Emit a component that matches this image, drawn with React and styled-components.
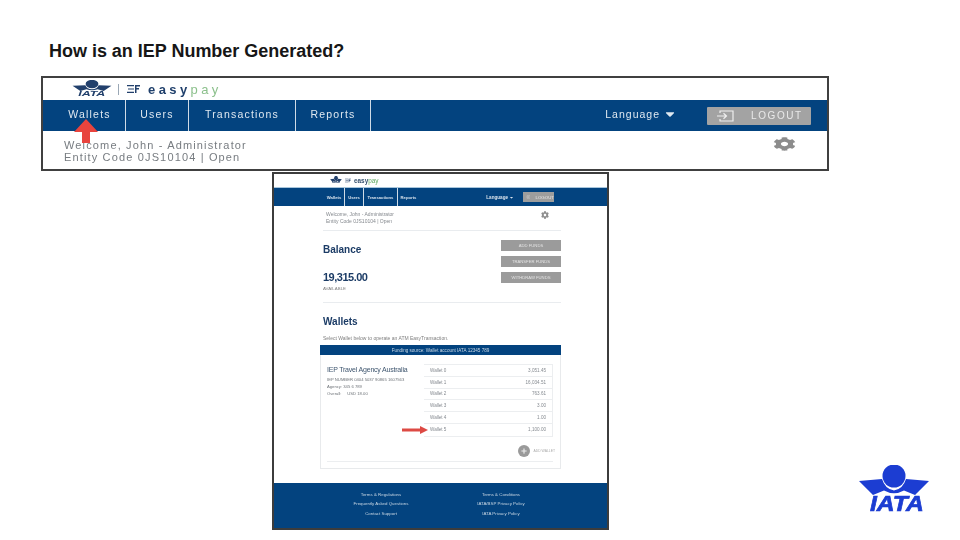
import React from "react";
import styled, { createGlobalStyle } from "styled-components";
import { FaCog, FaCaretDown, FaPlus } from "react-icons/fa";

const BLUE = "#03437f";
const Global = createGlobalStyle`
  html, body { margin: 0; padding: 0; background: #fff; }
  body { font-family: "Liberation Sans", Arial, sans-serif; }
`;
const Slide = styled.div`
  position: relative; width: 960px; height: 540px; overflow: hidden; background: #fff;
  padding-top: 42px; box-sizing: border-box;
`;
const Title = styled.h1`
  margin: 0 0 16px 49px; height: 18px; font-size: 18px; line-height: 18px; font-weight: 700; color: #161616;
  white-space: nowrap; letter-spacing: -.02px;
`;
/* top banner */
const Banner = styled.div`
  position: relative; margin-left: 41px; width: 788px; height: 95px; box-sizing: border-box;
  border: 2px solid #404040; overflow: hidden; display: flex; flex-direction: column; background: #fff;
`;
const BannerHead = styled.div`
  height: 22px; display: flex; align-items: center; padding-left: 29px; gap: 6px;
`;
const Sep = styled.span`width: 1px; height: 11px; background: #9aa7b5;`;
const Easy = styled.span`
  font-size: 13px; font-weight: 700; letter-spacing: 3.4px; color: #20406c; filter: blur(.4px);
  b { color: #8cc08c; font-weight: 400; }
`;
const BigNav = styled.nav`
  height: 31px; flex: none; background: ${BLUE}; display: flex; align-items: stretch; color: #dfe8f0;
`;
const BigItem = styled.div`
  width: ${p => p.$w}px; box-sizing: border-box; display: flex; align-items: center; justify-content: center;
  border-right: 1px solid #cfdbe6; font-size: 10.5px; letter-spacing: 1.2px; filter: blur(.4px); padding: 0 0 3px ${p => p.$pad || 0}px;
`;
const BigRight = styled.div`
  margin-left: auto; display: flex; align-items: center; padding-right: 16px;
`;
const BigLang = styled.div`
  font-size: 10.5px; letter-spacing: 1px; filter: blur(.4px); display: flex; align-items: center; gap: 3px; margin-right: 30px; color:#dfe8f0; padding-bottom: 3px;
`;
const BigLogout = styled.div`
  width: 104px; height: 18px; background: #a3a3a3; border-radius: 1px; display: flex; align-items: center;
  padding-left: 9px; gap: 17px; box-sizing: border-box; font-size: 10px; letter-spacing: 1.6px; color: #e9e9e9; filter: blur(.35px);
`;
const BannerBody = styled.div`
  flex: 1; display: flex; justify-content: space-between; padding: 7px 31px 0 21px; min-height: 0;
`;
const BigWelcome = styled.div`
  font-size: 11px; line-height: 12px; letter-spacing: 1.15px; color: #777c81; filter: blur(.4px); margin-top: 1px; white-space: nowrap;
`;
const BigGear = styled(FaCog)`color: #8c8c8c; width: 23px; height: 14px; margin-top: -1px;`;

/* embedded page */
const Page = styled.div`
  margin: 1px 0 0 272px; width: 337px; height: 358px; box-sizing: border-box; border: 2px solid #3c3c3c;
  background: #fff; display: flex; flex-direction: column; overflow: hidden; position: relative;
`;
const PageHead = styled.div`
  height: 13px; flex: none; display: flex; align-items: center; gap: 3px; padding-left: 56px;
`;
const TinyEasy = styled.span`
  font-size: 6.4px; font-weight: 700; color: #34506e; filter: blur(.35px); b { color: #5fa85f; font-weight: 400; }
`;
const Nav = styled.nav`
  height: 19px; flex: none; background: ${BLUE}; border-top: 1px solid #a8c6dc; box-sizing: border-box;
  display: flex; align-items: stretch; padding-left: 50px; color: #d8e2ec;
`;
const NavItem = styled.div`
  width: ${p => p.$w}px; box-sizing: border-box; display: flex; align-items: center; justify-content: center;
  border-right: ${p => p.$last ? 0 : "1px solid #cfdbe6"}; font-size: 4.2px; font-weight: 700; filter: blur(.35px);
`;
const NavRight = styled.div`margin-left: auto; display: flex; align-items: center; padding-right: 53px;`;
const NavLang = styled.div`
  font-size: 4.6px; font-weight: 700; margin-right: 9px; filter: blur(.35px); display: flex; align-items: center; gap: 1px;
`;
const NavLogout = styled.div`
  width: 31px; height: 10px; background: #9d9d9d; display: flex; align-items: center; gap: 5px; padding-left: 3px; box-sizing: border-box;
  font-size: 4.4px; color: #e8e8e8; filter: blur(.35px);
`;
const Content = styled.div`
  margin-left: 49px; width: 238px; flex: none;
`;
const Welcome = styled.div`
  height: 25px; box-sizing: border-box; border-bottom: 1px solid #e9ecef; display: flex; justify-content: space-between;
  padding: 5px 12px 0 3px; font-size: 5px; line-height: 6.5px; color: #85898e; filter: blur(.35px);
`;
const Gear = styled(FaCog)`color: #8f8f8f; width: 8px; height: 8px; margin-top: 0;`;
const Balance = styled.div`
  height: 72px; box-sizing: border-box; border-bottom: 1px solid #e9ecef; display: flex; justify-content: space-between;
  padding-top: 13px;
`;
const Heading = styled.h2`
  margin: 0; font-size: 10px; line-height: 12px; font-weight: 700; color: #1c3c66; filter: blur(.3px);
`;
const Amount = styled.div`
  margin-top: 15px; font-size: 11px; line-height: 13px; font-weight: 700; color: #1c3c66; filter: blur(.25px); letter-spacing: -.5px;
`;
const Avail = styled.div`margin-top: 2px; font-size: 4.4px; color: #808080; filter: blur(.35px);`;
const Actions = styled.div`display: flex; flex-direction: column; gap: 5px; margin-top: -4px;`;
const Action = styled.div`
  width: 60px; height: 11px; background: #9b9b9b; color: #e3e3e3; font-size: 4.2px; display: flex; align-items: center; justify-content: center;
  filter: blur(.3px);
`;
const WalletHead = styled.div`height: 42px; padding-top: 13px; box-sizing: border-box; `;
const Hint = styled.div`
  font-size: 5px; line-height: 6px; color: #808080; filter: blur(.35px); margin-top: 7px; white-space: nowrap;
`;
const Band = styled.div`
  margin-left: 46px; width: 241px; height: 10px; flex: none; background: ${BLUE}; color: #c9d7e4; font-size: 4.6px;
  display: flex; align-items: center; justify-content: center; filter: blur(.25px);
`;
const Card = styled.div`
  margin-left: 46px; width: 241px; height: 114px; flex: none; box-sizing: border-box; border: 1px solid #e8eaec; border-top: 0;
  padding: 9px 7px 0 6px; display: flex; flex-direction: column;
`;
const CardMain = styled.div`display: flex; justify-content: space-between; gap: 6px; height: 97px; border-bottom: 1px solid #eceef0;`;
const CardInfo = styled.div`padding-top: 1px;`;
const Agency = styled.div`font-size: 7px; line-height: 9px; color: #3f566f; filter: blur(.3px); letter-spacing: -.2px; white-space: nowrap; margin-bottom: 3px;`;
const Meta = styled.div`
  font-size: 4.2px; line-height: 6.9px; color: #6f7479; filter: blur(.35px); white-space: nowrap;
`;
const Side = styled.div`display: flex; flex-direction: column; width: 129px; flex: none;`;
const Table = styled.div`border: 1px solid #eceef0; border-left: 0; margin-bottom: 8px;`;
const Row = styled.div`
  height: 11.8px; box-sizing: border-box; border-bottom: 1px solid ${p => p.$last ? "transparent" : "#eceef0"};
  display: flex; justify-content: space-between; align-items: center; padding: 0 6px;
  font-size: 4.6px; color: #858a90; filter: blur(.35px);
`;
const AddRow = styled.div`display: flex; justify-content: flex-end; align-items: center; gap: 3px; font-size: 3.4px; color: #aaa; margin-right: -2px;`;
const AddCircle = styled.span`
  width: 12px; height: 12px; border-radius: 50%; background: #9a9a9a; color: #eee; display: flex; align-items: center; justify-content: center;
`;
const AddLabel = styled.span`filter: blur(.3px); white-space: nowrap;`;
const Footer = styled.footer`
  margin-top: auto; margin-bottom: 0; height: 45px; flex: none; background: ${BLUE}; color: #c8d6e3; display: grid;
  grid-template-columns: 120px 120px; justify-content: start; padding: 6.5px 0 0 47px; box-sizing: border-box; font-size: 4.4px;
`;
const FootCol = styled.div`
  display: flex; flex-direction: column; align-items: center; line-height: 9.5px; filter: blur(.3px); white-space: nowrap;
`;
/* overlays */
const Overlay = styled.svg`position: absolute; left: ${p => p.$x}px; top: ${p => p.$y}px; overflow: visible;`;
const IataMark = styled.div`
  position: absolute; left: 858px; top: 465px; width: 72px; height: 48px; color: #1c3dd2;
`;
const IataWord = styled.span`
  position: absolute; left: 12px; top: 28px; font-size: 22px; line-height: 22px; font-weight: 700; font-style: italic;
  transform: scaleX(1.12); transform-origin: left; -webkit-text-stroke: .7px #1c3dd2;
`;
const IataTiny = styled.span`
  font-size: ${p => p.$s}px; font-weight: 700; font-style: italic; color: #22406c; line-height: 1; filter: blur(.2px);
  transform: scaleX(${p => p.$sx || 1}); margin-top: -1px;
`;
const LogoStack = styled.div`display: flex; flex-direction: column; align-items: center; line-height: 1;`;
const WingsSvg = styled.svg`display: block;`;

const Wings = ({ w, h, c }) => (
  <WingsSvg width={w} height={h} viewBox="0 0 72 30" preserveAspectRatio="none">
    <path d="M1 16 L24 14 Q27 24 36 25.5 Q45 24 48 14 L71 16 L57 30 L46 25.5 Q36 31 26 25.5 L15 30 Z" fill={c} />
    <circle cx="36" cy="11" r="11.5" fill={c} />
  </WingsSvg>
);
const LogoutIcon = ({ w, h, c }) => (
  <svg width={w} height={h} viewBox="0 0 18 12" fill="none" stroke={c} strokeWidth="1.2">
    <path d="M4 3V1h13v10H4V9" />
    <path d="M1 6h9M7.5 3.2 10.5 6l-3 2.8" />
  </svg>
);
const PayMark = ({ w, h }) => (
  <svg width={w} height={h} viewBox="0 0 13 10" fill="#22406c"><path d="M0 1h7v1.2H0zM1 4.4h6v1.2H1zM0 7.8h7V9H0zM8 1h5v1.5H9.5v1.5H12v1.5H9.5V9H8z" /></svg>
);

export default function App() {
  return (
    <Slide>
      <Global />
      <Title>How is an IEP Number Generated?</Title>
      <Banner>
        <BannerHead>
          <LogoStack>
            <Wings w={40} h={11} c="#22406c" />
            <IataTiny $s={8} $sx={1.55}>IATA</IataTiny>
          </LogoStack>
          <Sep />
          <PayMark w={17} h={10} />
          <Easy>easy<b>pay</b></Easy>
        </BannerHead>
        <BigNav>
          <BigItem $w={83} $pad={11}>Wallets</BigItem>
          <BigItem $w={63}>Users</BigItem>
          <BigItem $w={107}>Transactions</BigItem>
          <BigItem $w={75}>Reports</BigItem>
          <BigRight>
            <BigLang>Language <FaCaretDown size={14} /></BigLang>
            <BigLogout><LogoutIcon w={18} h={12} c="#efefef" /><span>LOGOUT</span></BigLogout>
          </BigRight>
        </BigNav>
        <BannerBody>
          <BigWelcome>Welcome, John - Administrator<br />Entity Code 0JS10104 | Open</BigWelcome>
          <BigGear preserveAspectRatio="none" />
        </BannerBody>
        <Overlay $x={31} $y={41} width="24" height="25" viewBox="0 0 24 25">
          <path d="M12 0 24 13H16V24H8V13H0Z" fill="#e8443e" />
        </Overlay>
      </Banner>

      <Page>
        <PageHead>
          <LogoStack>
            <Wings w={12} h={6} c="#22406c" />
            <IataTiny $s={3.5}>IATA</IataTiny>
          </LogoStack>
          <PayMark w={6} h={5} />
          <TinyEasy>easy<b>pay</b></TinyEasy>
        </PageHead>
        <Nav>
          <NavItem $w={21}>Wallets</NavItem>
          <NavItem $w={19}>Users</NavItem>
          <NavItem $w={34}>Transactions</NavItem>
          <NavItem $w={21} $last>Reports</NavItem>
          <NavRight>
            <NavLang>Language <FaCaretDown size={5} /></NavLang>
            <NavLogout><LogoutIcon w={7} h={6} c="#efefef" /><span>LOGOUT</span></NavLogout>
          </NavRight>
        </Nav>
        <Content>
          <Welcome>
            <div>Welcome, John - Administrator<br />Entity Code 0JS10104 | Open</div>
            <Gear />
          </Welcome>
          <Balance>
            <div>
              <Heading>Balance</Heading>
              <Amount>19,315.00</Amount>
              <Avail>AVAILABLE</Avail>
            </div>
            <Actions>
              <Action>ADD FUNDS</Action>
              <Action>TRANSFER FUNDS</Action>
              <Action>WITHDRAW FUNDS</Action>
            </Actions>
          </Balance>
          <WalletHead>
            <Heading>Wallets</Heading>
            <Hint>Select Wallet below to operate an ATM EasyTransaction.</Hint>
          </WalletHead>
        </Content>
        <Band>Funding source: Wallet account IATA 12345 789</Band>
        <Card>
          <CardMain>
            <CardInfo>
              <Agency>IEP Travel Agency Australia</Agency>
              <Meta>IEP NUMBER 0404 5037 90865 1607563</Meta>
              <Meta>Agency: 345 6 789</Meta>
              <Meta>Overall:&nbsp;&nbsp;&nbsp;&nbsp;&nbsp;USD 18.00</Meta>
            </CardInfo>
            <Side>
              <Table>
                <Row><span>Wallet 0</span><span>3,051.45</span></Row>
                <Row><span>Wallet 1</span><span>16,034.51</span></Row>
                <Row><span>Wallet 2</span><span>763.61</span></Row>
                <Row><span>Wallet 3</span><span>3.00</span></Row>
                <Row><span>Wallet 4</span><span>1.00</span></Row>
                <Row $last><span>Wallet 5</span><span>1,100.00</span></Row>
              </Table>
              <AddRow>
                <AddCircle><FaPlus size={6} /></AddCircle>
                <AddLabel>ADD WALLET</AddLabel>
              </AddRow>
            </Side>
          </CardMain>
        </Card>
        <Footer>
          <FootCol><span>Terms &amp; Regulations</span><span>Frequently Asked Questions</span><span>Contact Support</span></FootCol>
          <FootCol><span>Terms &amp; Conditions</span><span>IATA/BSP Privacy Policy</span><span>IATA Privacy Policy</span></FootCol>
        </Footer>
        <Overlay $x={128} $y={252} width="26" height="8" viewBox="0 0 26 8">
          <path d="M0 2.4h18V0l8 4-8 4V5.6H0Z" fill="#dd4a44" />
        </Overlay>
      </Page>

      <IataMark>
        <Wings w={72} h={30} c="#1c3dd2" />
        <IataWord>IATA</IataWord>
      </IataMark>
    </Slide>
  );
}
